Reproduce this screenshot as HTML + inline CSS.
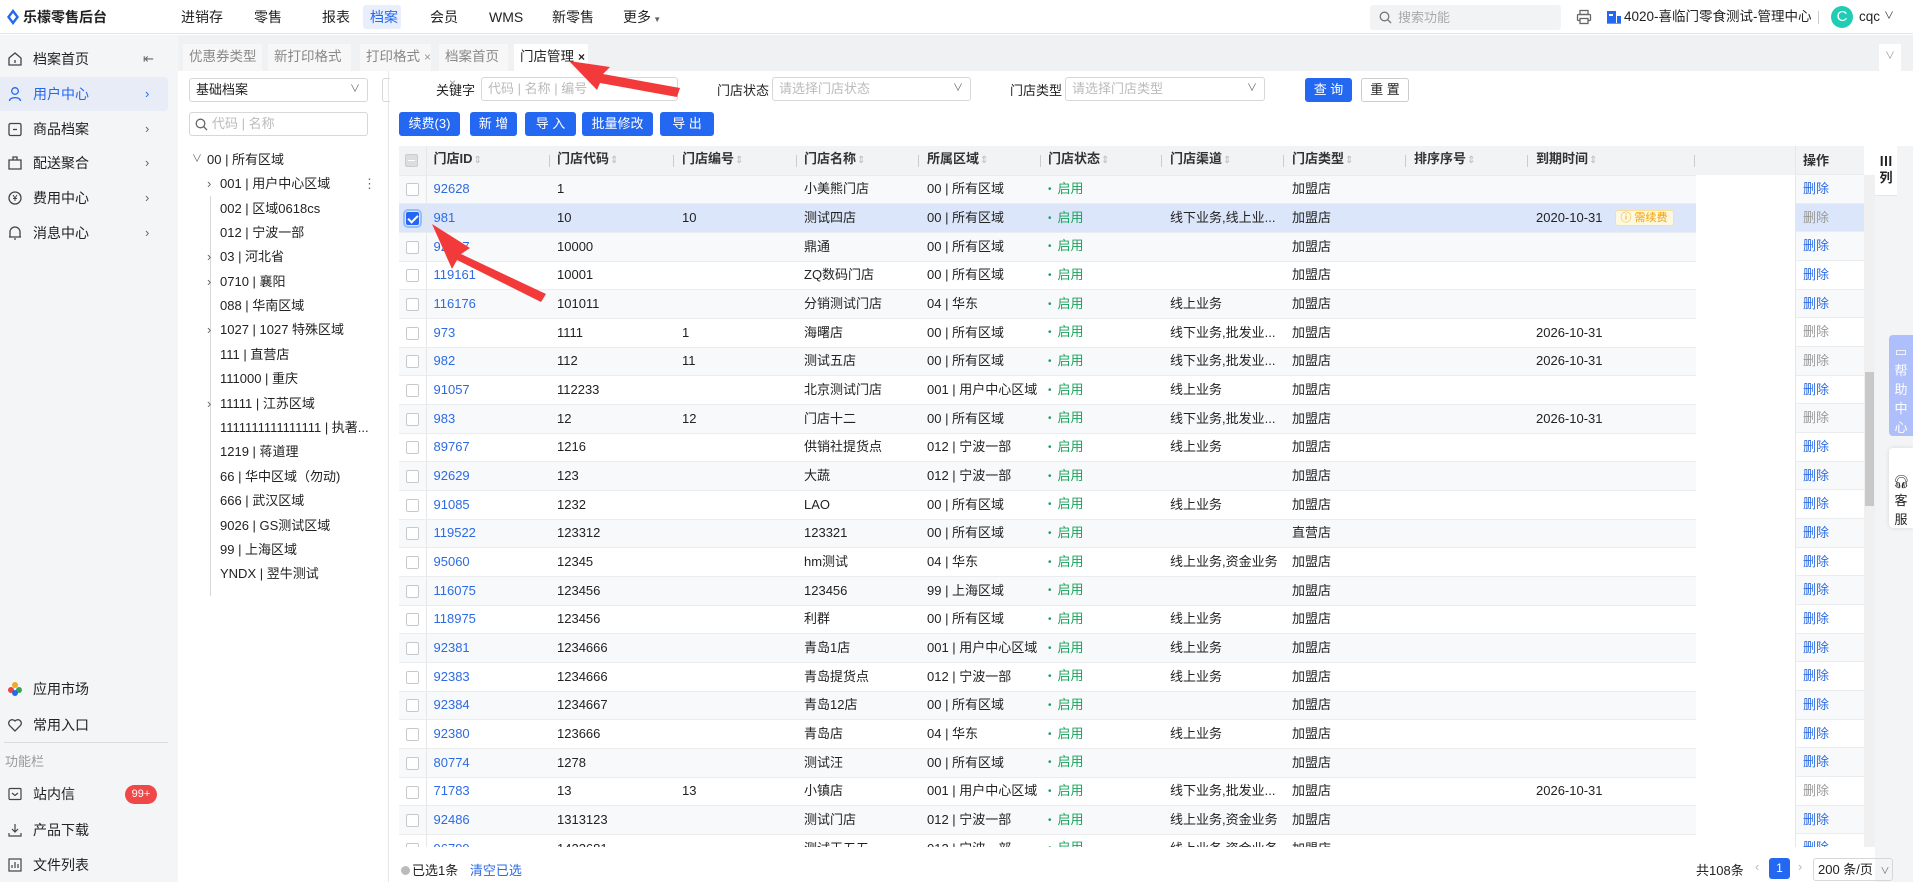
<!DOCTYPE html>
<html><head><meta charset="utf-8">
<style>
*{box-sizing:border-box;margin:0;padding:0}
body{width:1913px;height:882px;position:relative;overflow:hidden;background:#fff;font-family:"Liberation Sans","Noto Sans CJK SC",sans-serif;font-size:13px;color:#222}
.a{position:absolute;white-space:nowrap}
#hdr{position:absolute;left:0;top:0;width:1913px;height:34px;background:#fff;border-bottom:1px solid #e3e4e6}
.nav{position:absolute;top:0;height:34px;line-height:34px;font-size:14px;color:#222}
#side{position:absolute;left:0;top:35px;width:178px;height:847px;background:#f4f5f7}
.si{position:absolute;left:0;width:168px;height:34px;line-height:34px;font-size:14px;padding-left:33px;color:#222}
.si svg{position:absolute;left:7px;top:9px}
.si .ar{position:absolute;left:145px;top:0;color:#666;font-size:13px}
#tabs{position:absolute;left:178px;top:35px;width:1735px;height:36px;background:#f0f1f3}
.tab{position:absolute;top:9px;height:27px;line-height:26px;background:#f7f7f8;color:#888;font-size:13.5px;padding-left:6px}
.tab b{font-weight:normal;color:#999;margin-left:4px;font-size:12px}
#tree{position:absolute;left:178px;top:71px;width:211px;height:811px;background:#fff;border-right:1px solid #e6e7e9}
.inp{position:absolute;height:24px;border:1px solid #d6d7d9;border-radius:3px;background:#fff;color:#bbb;font-size:13px;line-height:22px;padding-left:6px}
.ti{position:absolute;font-size:13px;color:#222;line-height:18px}
.tl{position:absolute;left:210px;width:1px;background:#d8d8d8}
.btn{position:absolute;top:112px;height:24px;line-height:24px;background:#2468f2;color:#fff;border-radius:3px;text-align:center;font-size:13px}
table{border-collapse:collapse;table-layout:fixed;position:absolute;left:399px;top:146px;width:1297px}
tr{height:28.68px}
td{height:28.68px;line-height:16px;vertical-align:middle;padding:0 0 0 7px;white-space:nowrap;overflow:hidden;border-bottom:1px solid #ebeced;font-size:13px}
tr.h{height:29px}
tr.h td{height:29px;background:#f2f3f5;font-weight:bold;color:#333}
tbody tr:nth-child(odd) td{background:#f8f9fa}
tbody tr.sel td{background:#dce6fa}
td:first-child{padding-left:7px;border-right:1px solid #e6e7e9}
.cb{display:inline-block;width:13px;height:13px;border:1px solid #c9c9c9;background:#fff;border-radius:2px;vertical-align:middle}
.ck{background:#2468f2;border-color:#2468f2;position:relative;outline:2px solid #9cbcf8;outline-offset:1px}
.ck:after{content:"";position:absolute;left:3px;top:0px;width:4px;height:8px;border:solid #fff;border-width:0 2px 2px 0;transform:rotate(45deg)}
.l{color:#2d6be4}
.s{color:#19a35b}
.s:before{content:"•";margin-right:6px;font-size:10px;vertical-align:1px}
.srt{color:#bbb;font-weight:normal;font-size:10px;margin-left:1px}
.sep{position:absolute;top:155px;width:1px;height:12px;background:#ccc}
.bdg{display:inline-block;margin-left:12px;padding:0 5px;height:16px;line-height:14px;border:1px solid #fbe09a;background:#fff8e1;color:#f0a000;font-size:11px;border-radius:3px;vertical-align:middle}
#op{position:absolute;left:1795px;top:146px;width:69px}
#op div{height:28.68px;line-height:28px;padding-left:7px;border-bottom:1px solid #ebeced;border-left:1px solid #e6e7e9;color:#2d6be4;background:#fff}
#op div:nth-child(even){background:#f8f9fa}
#op div.g{color:#999}
#op div.hd{height:29px;background:#f2f3f5;color:#333;font-weight:bold;line-height:29px}
#op div.sl{background:#dce6fa}
</style></head><body>

<div id="hdr">
 <svg class="a" style="left:6px;top:9px" width="14" height="16" viewBox="0 0 14 16"><path d="M7 0 L13 8 L7 16 L1 8Z" fill="#2468f2"/><path d="M7 4 L10 8 L7 12 L4 8Z" fill="#fff"/></svg>
 <div class="a" style="left:23px;top:0;line-height:34px;font-size:14px;font-weight:bold;color:#222">乐檬零售后台</div>
 <div class="nav" style="left:181px">进销存</div>
 <div class="nav" style="left:254px">零售</div>
 <div class="nav" style="left:322px">报表</div>
 <div class="a" style="left:363px;top:5px;width:38px;height:24px;background:#e8eefc;border-radius:3px"></div>
 <div class="nav" style="left:370px;color:#2468f2">档案</div>
 <div class="nav" style="left:430px">会员</div>
 <div class="nav" style="left:489px">WMS</div>
 <div class="nav" style="left:552px">新零售</div>
 <div class="nav" style="left:623px">更多<span style="font-size:8px;color:#666"> ▼</span></div>
 <div class="a" style="left:1370px;top:5px;width:191px;height:25px;background:#f2f3f5;border-radius:3px;color:#aaa;line-height:25px;padding-left:28px;font-size:13px">搜索功能</div>
 <svg class="a" style="left:1379px;top:11px" width="13" height="13" viewBox="0 0 13 13"><circle cx="5.5" cy="5.5" r="4.3" fill="none" stroke="#777" stroke-width="1.3"/><path d="M8.7 8.7L12 12" stroke="#777" stroke-width="1.3"/></svg>
 <svg class="a" style="left:1576px;top:9px" width="16" height="16" viewBox="0 0 16 16"><rect x="4" y="1.5" width="8" height="4" fill="none" stroke="#666" stroke-width="1.3"/><rect x="1.5" y="5.5" width="13" height="6" rx="1" fill="none" stroke="#666" stroke-width="1.3"/><rect x="4" y="9.5" width="8" height="5" fill="#fff" stroke="#666" stroke-width="1.3"/></svg>
 <svg class="a" style="left:1607px;top:11px" width="14" height="13" viewBox="0 0 14 13"><rect x="0" y="0" width="9" height="13" fill="#2468f2"/><rect x="10" y="5" width="4" height="8" fill="#2468f2"/><rect x="2" y="3" width="4" height="2" fill="#fff"/><rect x="0" y="12" width="14" height="1" fill="#6a9af5"/></svg>
 <div class="a" style="left:1624px;top:0;line-height:34px;font-size:13.5px">4020-喜临门零食测试-管理中心</div>
 <div class="a" style="left:1818px;top:11px;width:1px;height:13px;background:#ccc"></div>
 <div class="a" style="left:1831px;top:6px;width:22px;height:22px;border-radius:50%;background:#1fcdb5;color:#fff;text-align:center;line-height:22px;font-size:15px">C</div>
 <div class="a" style="left:1859px;top:0;line-height:34px;font-size:13.5px">cqc</div>
 <div class="a" style="left:1884px;top:0;line-height:33px;font-size:10px;color:#333">∨</div>
</div>

<div id="side">
 <div class="si" style="top:7px"><svg width="16" height="16" viewBox="0 0 16 16"><path d="M2 7L8 2L14 7V14H2Z M8 9V12" fill="none" stroke="#444" stroke-width="1.3"/></svg>档案首页<span class="ar" style="left:143px">⇤</span></div>
 <div class="a" style="left:0;top:42px;width:168px;height:34px;background:#e7ecf6;border-radius:0 4px 4px 0"></div>
 <div class="si" style="top:42px;color:#2468f2"><svg width="16" height="16" viewBox="0 0 16 16"><circle cx="8" cy="5" r="3.3" fill="none" stroke="#2468f2" stroke-width="1.3"/><path d="M2.5 15C2.5 10.5 13.5 10.5 13.5 15" fill="none" stroke="#2468f2" stroke-width="1.3"/></svg>用户中心<span class="ar" style="color:#2468f2">›</span></div>
 <div class="si" style="top:77px"><svg width="16" height="16" viewBox="0 0 16 16"><rect x="2" y="2.5" width="12" height="12" rx="1.5" fill="none" stroke="#444" stroke-width="1.3"/><path d="M6 8.5H10" stroke="#444" stroke-width="1.3"/></svg>商品档案<span class="ar">›</span></div>
 <div class="si" style="top:111px"><svg width="16" height="16" viewBox="0 0 16 16"><path d="M2 5H14V14H2Z M6 5V2H10V5" fill="none" stroke="#444" stroke-width="1.3"/></svg>配送聚合<span class="ar">›</span></div>
 <div class="si" style="top:146px"><svg width="16" height="16" viewBox="0 0 16 16"><circle cx="8" cy="8" r="6" fill="none" stroke="#444" stroke-width="1.3"/><path d="M6 5L8 8L10 5M8 8V11M6 8.5H10" fill="none" stroke="#444" stroke-width="1"/></svg>费用中心<span class="ar">›</span></div>
 <div class="si" style="top:181px"><svg width="16" height="16" viewBox="0 0 16 16"><path d="M3 12V7A5 5 0 0 1 13 7V12Z M2 12H14 M7 14H9" fill="none" stroke="#444" stroke-width="1.3"/></svg>消息中心<span class="ar">›</span></div>
 <div class="si" style="top:637px"><svg width="16" height="16" viewBox="0 0 16 16"><circle cx="8" cy="4" r="3" fill="#f5a623"/><circle cx="4" cy="9" r="3" fill="#e8453c"/><circle cx="12" cy="9" r="3" fill="#34a853"/><circle cx="8" cy="12" r="3" fill="#2468f2"/></svg>应用市场</div>
 <div class="si" style="top:673px"><svg width="16" height="16" viewBox="0 0 16 16"><path d="M8 14L2.5 8.5A3.2 3.2 0 0 1 8 4A3.2 3.2 0 0 1 13.5 8.5Z" fill="none" stroke="#444" stroke-width="1.3"/></svg>常用入口</div>
 <div class="a" style="left:4px;top:707px;width:164px;height:1px;background:#dcdcdc"></div>
 <div class="a" style="left:5px;top:716px;color:#999;font-size:13px">功能栏</div>
 <div class="si" style="top:742px"><svg width="16" height="16" viewBox="0 0 16 16"><rect x="2" y="2.5" width="12" height="11" rx="1" fill="none" stroke="#444" stroke-width="1.2"/><path d="M5 7L8 9.5L11 7" fill="none" stroke="#444" stroke-width="1.2"/></svg>站内信</div>
 <div class="a" style="left:125px;top:750px;width:32px;height:19px;border-radius:10px;background:#f04848;color:#fff;font-size:11px;text-align:center;line-height:19px">99+</div>
 <div class="si" style="top:778px"><svg width="16" height="16" viewBox="0 0 16 16"><path d="M8 2V10M5 7L8 10L11 7M2 11V14H14V11" fill="none" stroke="#444" stroke-width="1.2"/></svg>产品下载</div>
 <div class="si" style="top:813px"><svg width="16" height="16" viewBox="0 0 16 16"><rect x="2" y="2" width="12" height="12" fill="none" stroke="#444" stroke-width="1.2"/><path d="M5 11V8M8 11V5M11 11V7" stroke="#444" stroke-width="1.2"/></svg>文件列表</div>
</div>

<div id="tabs">
 <div class="tab" style="left:5px;width:79px">优惠券类型<b>×</b></div>
 <div class="tab" style="left:90px;width:83px">新打印格式<b>×</b></div>
 <div class="tab" style="left:182px;width:71px">打印格式<b>×</b></div>
 <div class="tab" style="left:261px;width:69px">档案首页<b>×</b></div>
 <div class="tab" style="left:336px;width:74px;background:#fff;color:#222">门店管理<b style="color:#222;font-weight:bold">×</b></div>
 <div class="a" style="left:1701px;top:9px;width:22px;height:27px;background:#fff;color:#999;text-align:center;line-height:26px;font-size:10px">∨</div>
</div>

<div id="tree">
 <div class="inp" style="left:11px;top:7px;width:179px;color:#222">基础档案<span style="position:absolute;right:7px;color:#666;font-size:10px">∨</span></div>
 <div class="a" style="left:204px;top:7px;width:8px;height:24px;border:1px solid #d6d7d9;border-right:0;border-radius:3px 0 0 3px"></div>
 <div class="inp" style="left:11px;top:41px;width:179px;padding-left:22px">代码 | 名称</div>
 <svg class="a" style="left:17px;top:47px" width="13" height="13" viewBox="0 0 13 13"><circle cx="5.5" cy="5.5" r="4.3" fill="none" stroke="#666" stroke-width="1.3"/><path d="M8.7 8.7L12 12" stroke="#666" stroke-width="1.3"/></svg>
</div>
<div class="tl" style="top:196px;height:400px"></div>
<div class="ti" style="left:192px;top:151px;color:#666;font-size:10px">∨</div>
<div class="ti" style="left:207px;top:151px">00 | 所有区域</div>
<div class="ti" style="left:207px;top:175px;color:#666">›</div><div class="ti" style="left:220px;top:175px">001 | 用户中心区域</div><div class="ti" style="left:363px;top:175px;color:#666">⋮</div>
<div class="ti" style="left:220px;top:200px">002 | 区域0618cs</div>
<div class="ti" style="left:220px;top:224px">012 | 宁波一部</div>
<div class="ti" style="left:207px;top:248px;color:#666">›</div><div class="ti" style="left:220px;top:248px">03 | 河北省</div>
<div class="ti" style="left:207px;top:273px;color:#666">›</div><div class="ti" style="left:220px;top:273px">0710 | 襄阳</div>
<div class="ti" style="left:220px;top:297px">088 | 华南区域</div>
<div class="ti" style="left:207px;top:321px;color:#666">›</div><div class="ti" style="left:220px;top:321px">1027 | 1027 特殊区域</div>
<div class="ti" style="left:220px;top:346px">111 | 直营店</div>
<div class="ti" style="left:220px;top:370px">111000 | 重庆</div>
<div class="ti" style="left:207px;top:395px;color:#666">›</div><div class="ti" style="left:220px;top:395px">11111 | 江苏区域</div>
<div class="ti" style="left:220px;top:419px">1111111111111111 | 执著...</div>
<div class="ti" style="left:220px;top:443px">1219 | 蒋道理</div>
<div class="ti" style="left:220px;top:468px">66 | 华中区域（勿动)</div>
<div class="ti" style="left:220px;top:492px">666 | 武汉区域</div>
<div class="ti" style="left:220px;top:517px">9026 | GS测试区域</div>
<div class="ti" style="left:220px;top:541px">99 | 上海区域</div>
<div class="ti" style="left:220px;top:565px">YNDX | 翌牛测试</div>

<div class="a" style="left:436px;top:80px">关键字</div>
<div class="inp" style="left:481px;top:77px;width:197px">代码 | 名称 | 编号</div>
<div class="a" style="left:717px;top:80px">门店状态</div>
<div class="inp" style="left:772px;top:77px;width:199px">请选择门店状态<span style="position:absolute;right:7px;color:#666;font-size:10px">∨</span></div>
<div class="a" style="left:1010px;top:80px">门店类型</div>
<div class="inp" style="left:1065px;top:77px;width:200px">请选择门店类型<span style="position:absolute;right:7px;color:#666;font-size:10px">∨</span></div>
<div class="btn" style="left:1305px;top:78px;width:47px;height:24px">查 询</div>
<div class="a" style="left:1361px;top:78px;width:48px;height:24px;border:1px solid #ccc;border-radius:3px;text-align:center;line-height:22px">重 置</div>

<div class="btn" style="left:399px;width:61px">续费(3)</div>
<div class="btn" style="left:470px;width:47px">新 增</div>
<div class="btn" style="left:525px;width:51px">导 入</div>
<div class="btn" style="left:582px;width:71px">批量修改</div>
<div class="btn" style="left:660px;width:54px">导 出</div>

<div class="a" style="left:1696px;top:146px;width:99px;height:29px;background:#f2f3f5"></div>
<table>
<colgroup><col style="width:27px"><col style="width:124px"><col style="width:125px"><col style="width:122px"><col style="width:123px"><col style="width:121px"><col style="width:122px"><col style="width:122px"><col style="width:122px"><col style="width:122px"><col style="width:167px"></colgroup>
<thead><tr class="h"><td style="padding-left:6px"><span class="cb" style="background:#ddd;border-color:#ccc;position:relative"><span style="position:absolute;left:2px;top:5px;width:7px;height:1px;background:#fff"></span></span></td><td>门店ID<span class="srt">⇕</span></td><td>门店代码<span class="srt">⇕</span></td><td>门店编号<span class="srt">⇕</span></td><td>门店名称<span class="srt">⇕</span></td><td>所属区域<span class="srt">⇕</span></td><td>门店状态<span class="srt">⇕</span></td><td>门店渠道<span class="srt">⇕</span></td><td>门店类型<span class="srt">⇕</span></td><td>排序序号<span class="srt">⇕</span></td><td>到期时间<span class="srt">⇕</span></td></tr></thead>
<tbody>
<tr><td><i class="cb"></i></td><td class="l">92628</td><td>1</td><td></td><td>小美熊门店</td><td>00 | 所有区域</td><td class="s">启用</td><td></td><td>加盟店</td><td></td><td></td></tr>
<tr class="sel"><td><i class="cb ck"></i></td><td class="l">981</td><td>10</td><td>10</td><td>测试四店</td><td>00 | 所有区域</td><td class="s">启用</td><td>线下业务,线上业...</td><td>加盟店</td><td></td><td>2020-10-31<span class="bdg">ⓘ 需续费</span></td></tr>
<tr><td><i class="cb"></i></td><td class="l">92627</td><td>10000</td><td></td><td>鼎通</td><td>00 | 所有区域</td><td class="s">启用</td><td></td><td>加盟店</td><td></td><td></td></tr>
<tr><td><i class="cb"></i></td><td class="l">119161</td><td>10001</td><td></td><td>ZQ数码门店</td><td>00 | 所有区域</td><td class="s">启用</td><td></td><td>加盟店</td><td></td><td></td></tr>
<tr><td><i class="cb"></i></td><td class="l">116176</td><td>101011</td><td></td><td>分销测试门店</td><td>04 | 华东</td><td class="s">启用</td><td>线上业务</td><td>加盟店</td><td></td><td></td></tr>
<tr><td><i class="cb"></i></td><td class="l">973</td><td>1111</td><td>1</td><td>海曙店</td><td>00 | 所有区域</td><td class="s">启用</td><td>线下业务,批发业...</td><td>加盟店</td><td></td><td>2026-10-31</td></tr>
<tr><td><i class="cb"></i></td><td class="l">982</td><td>112</td><td>11</td><td>测试五店</td><td>00 | 所有区域</td><td class="s">启用</td><td>线下业务,批发业...</td><td>加盟店</td><td></td><td>2026-10-31</td></tr>
<tr><td><i class="cb"></i></td><td class="l">91057</td><td>112233</td><td></td><td>北京测试门店</td><td>001 | 用户中心区域</td><td class="s">启用</td><td>线上业务</td><td>加盟店</td><td></td><td></td></tr>
<tr><td><i class="cb"></i></td><td class="l">983</td><td>12</td><td>12</td><td>门店十二</td><td>00 | 所有区域</td><td class="s">启用</td><td>线下业务,批发业...</td><td>加盟店</td><td></td><td>2026-10-31</td></tr>
<tr><td><i class="cb"></i></td><td class="l">89767</td><td>1216</td><td></td><td>供销社提货点</td><td>012 | 宁波一部</td><td class="s">启用</td><td>线上业务</td><td>加盟店</td><td></td><td></td></tr>
<tr><td><i class="cb"></i></td><td class="l">92629</td><td>123</td><td></td><td>大蔬</td><td>012 | 宁波一部</td><td class="s">启用</td><td></td><td>加盟店</td><td></td><td></td></tr>
<tr><td><i class="cb"></i></td><td class="l">91085</td><td>1232</td><td></td><td>LAO</td><td>00 | 所有区域</td><td class="s">启用</td><td>线上业务</td><td>加盟店</td><td></td><td></td></tr>
<tr><td><i class="cb"></i></td><td class="l">119522</td><td>123312</td><td></td><td>123321</td><td>00 | 所有区域</td><td class="s">启用</td><td></td><td>直营店</td><td></td><td></td></tr>
<tr><td><i class="cb"></i></td><td class="l">95060</td><td>12345</td><td></td><td>hm测试</td><td>04 | 华东</td><td class="s">启用</td><td>线上业务,资金业务</td><td>加盟店</td><td></td><td></td></tr>
<tr><td><i class="cb"></i></td><td class="l">116075</td><td>123456</td><td></td><td>123456</td><td>99 | 上海区域</td><td class="s">启用</td><td></td><td>加盟店</td><td></td><td></td></tr>
<tr><td><i class="cb"></i></td><td class="l">118975</td><td>123456</td><td></td><td>利群</td><td>00 | 所有区域</td><td class="s">启用</td><td>线上业务</td><td>加盟店</td><td></td><td></td></tr>
<tr><td><i class="cb"></i></td><td class="l">92381</td><td>1234666</td><td></td><td>青岛1店</td><td>001 | 用户中心区域</td><td class="s">启用</td><td>线上业务</td><td>加盟店</td><td></td><td></td></tr>
<tr><td><i class="cb"></i></td><td class="l">92383</td><td>1234666</td><td></td><td>青岛提货点</td><td>012 | 宁波一部</td><td class="s">启用</td><td>线上业务</td><td>加盟店</td><td></td><td></td></tr>
<tr><td><i class="cb"></i></td><td class="l">92384</td><td>1234667</td><td></td><td>青岛12店</td><td>00 | 所有区域</td><td class="s">启用</td><td></td><td>加盟店</td><td></td><td></td></tr>
<tr><td><i class="cb"></i></td><td class="l">92380</td><td>123666</td><td></td><td>青岛店</td><td>04 | 华东</td><td class="s">启用</td><td>线上业务</td><td>加盟店</td><td></td><td></td></tr>
<tr><td><i class="cb"></i></td><td class="l">80774</td><td>1278</td><td></td><td>测试汪</td><td>00 | 所有区域</td><td class="s">启用</td><td></td><td>加盟店</td><td></td><td></td></tr>
<tr><td><i class="cb"></i></td><td class="l">71783</td><td>13</td><td>13</td><td>小镇店</td><td>001 | 用户中心区域</td><td class="s">启用</td><td>线下业务,批发业...</td><td>加盟店</td><td></td><td>2026-10-31</td></tr>
<tr><td><i class="cb"></i></td><td class="l">92486</td><td>1313123</td><td></td><td>测试门店</td><td>012 | 宁波一部</td><td class="s">启用</td><td>线上业务,资金业务</td><td>加盟店</td><td></td><td></td></tr>
<tr><td><i class="cb"></i></td><td class="l">96799</td><td>1423681</td><td></td><td>测试王五五</td><td>012 | 宁波一部</td><td class="s">启用</td><td>线上业务,资金业务</td><td>加盟店</td><td></td><td></td></tr>
</tbody></table>
<div class="sep" style="left:549px"></div><div class="sep" style="left:673px"></div><div class="sep" style="left:796px"></div><div class="sep" style="left:918px"></div><div class="sep" style="left:1040px"></div><div class="sep" style="left:1161px"></div><div class="sep" style="left:1283px"></div><div class="sep" style="left:1405px"></div><div class="sep" style="left:1527px"></div><div class="sep" style="left:1694px"></div>

<div id="op">
<div class="hd">操作</div>
<div>删除</div><div class="g sl">删除</div><div>删除</div><div>删除</div><div>删除</div><div class="g">删除</div><div class="g">删除</div><div>删除</div><div class="g">删除</div><div>删除</div><div>删除</div><div>删除</div><div>删除</div><div>删除</div><div>删除</div><div>删除</div><div>删除</div><div>删除</div><div>删除</div><div>删除</div><div>删除</div><div class="g">删除</div><div>删除</div><div>删除</div>
</div>
<div class="a" style="left:399px;top:847px;width:1490px;height:35px;background:#fff"></div>
<div class="a" style="left:1864px;top:175px;width:11px;height:672px;background:#f0f0f0"></div>
<div class="a" style="left:1865px;top:372px;width:9px;height:134px;background:#c8c8c8"></div>
<div class="a" style="left:1875px;top:146px;width:38px;height:736px;background:#f3f4f6"></div>
<div class="a" style="left:1875px;top:146px;width:22px;height:50px;background:#fff;border-bottom:1px solid #e6e6e6;font-size:13px;text-align:center;padding-top:8px;line-height:16px;font-weight:bold">Ⅲ<br>列</div>

<div class="a" style="left:1889px;top:335px;width:24px;height:101px;background:#aebffb;border-radius:4px 0 0 4px;color:#fff;font-size:13px;text-align:center;line-height:19px;padding-top:7px;white-space:normal">▭<br>帮<br>助<br>中<br>心</div>
<div class="a" style="left:1889px;top:448px;width:24px;height:80px;background:#fff;border-radius:4px 0 0 4px;box-shadow:0 0 4px rgba(0,0,0,.12);font-size:13px;text-align:center;line-height:19px;padding-top:24px;white-space:normal">🎧︎<br>客<br>服</div>

<div class="a" style="left:401px;top:860px;color:#222;font-size:13px"><span style="display:inline-block;width:9px;height:9px;border-radius:50%;background:#bbb;margin-right:2px"></span>已选1条 <span style="color:#2d6be4;margin-left:8px">清空已选</span></div>
<div class="a" style="left:1696px;top:860px;font-size:13px">共108条</div>
<div class="a" style="left:1755px;top:859px;color:#bbb;font-size:13px">‹</div>
<div class="a" style="left:1769px;top:858px;width:21px;height:21px;background:#2468f2;border-radius:3px;color:#fff;text-align:center;line-height:21px;font-size:12px">1</div>
<div class="a" style="left:1798px;top:859px;color:#bbb;font-size:13px">›</div>
<div class="a" style="left:1813px;top:858px;width:80px;height:23px;border:1px solid #d6d7d9;border-radius:3px;font-size:13px;line-height:21px;padding-left:4px">200 条/页 <span style="font-size:9px;color:#666;margin-left:4px">∨</span></div>

<svg class="a" style="left:0;top:0" width="1913" height="882" viewBox="0 0 1913 882">
<polygon points="569,61 610,67 603,74 680,88 677,97 600,83 597,90" fill="#f23a3a"/>
<polygon points="432,224 470,248 461,254 546,294 541,302 457,260 452,269" fill="#f23a3a"/>
</svg>
</body></html>
